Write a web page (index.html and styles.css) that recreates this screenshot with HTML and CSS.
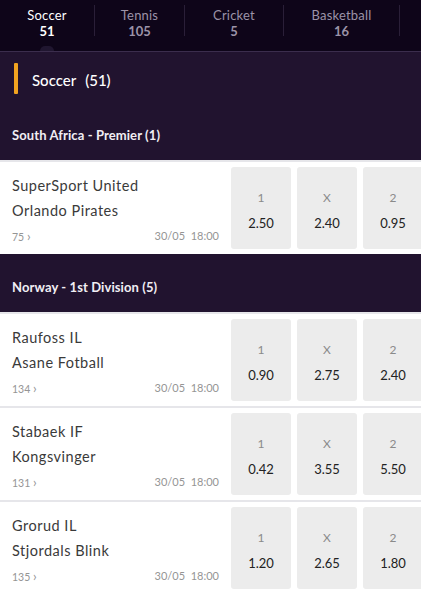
FILE: index.html
```html
<!DOCTYPE html>
<html lang="en">
<head>
<meta charset="utf-8">
<title>Sports</title>
<link rel="stylesheet" href="styles.css">
</head>
<body>
<nav class="tabs">
  <div class="tab tab-active"><span class="tab-name">Soccer</span><span class="tab-count">51</span><span class="tab-marker"></span></div>
  <div class="tab-sep"></div>
  <div class="tab"><span class="tab-name">Tennis</span><span class="tab-count">105</span></div>
  <div class="tab-sep"></div>
  <div class="tab"><span class="tab-name">Cricket</span><span class="tab-count">5</span></div>
  <div class="tab-sep"></div>
  <div class="tab"><span class="tab-name">Basketball</span><span class="tab-count">16</span></div>
  <div class="tab-sep"></div>
</nav>

<section class="sport">
  <div class="sport-title">
    <span class="sport-bar"></span>
    <span class="sport-name">Soccer</span>
    <span class="sport-total">(51)</span>
  </div>

  <div class="league">South Africa - Premier (1)</div>
  <div class="match">
    <div class="teams">
      <div class="team">SuperSport United</div>
      <div class="team">Orlando Pirates</div>
      <div class="meta"><span class="markets">75 <span class="chev">›</span></span><span class="time">30/05&nbsp; 18:00</span></div>
    </div>
    <div class="odd"><span class="odd-label">1</span><span class="odd-value">2.50</span></div>
    <div class="odd"><span class="odd-label">X</span><span class="odd-value">2.40</span></div>
    <div class="odd"><span class="odd-label">2</span><span class="odd-value">0.95</span></div>
  </div>

  <div class="league">Norway - 1st Division (5)</div>
  <div class="match">
    <div class="teams">
      <div class="team">Raufoss IL</div>
      <div class="team">Asane Fotball</div>
      <div class="meta"><span class="markets">134 <span class="chev">›</span></span><span class="time">30/05&nbsp; 18:00</span></div>
    </div>
    <div class="odd"><span class="odd-label">1</span><span class="odd-value">0.90</span></div>
    <div class="odd"><span class="odd-label">X</span><span class="odd-value">2.75</span></div>
    <div class="odd"><span class="odd-label">2</span><span class="odd-value">2.40</span></div>
  </div>
  <div class="match">
    <div class="teams">
      <div class="team">Stabaek IF</div>
      <div class="team">Kongsvinger</div>
      <div class="meta"><span class="markets">131 <span class="chev">›</span></span><span class="time">30/05&nbsp; 18:00</span></div>
    </div>
    <div class="odd"><span class="odd-label">1</span><span class="odd-value">0.42</span></div>
    <div class="odd"><span class="odd-label">X</span><span class="odd-value">3.55</span></div>
    <div class="odd"><span class="odd-label">2</span><span class="odd-value">5.50</span></div>
  </div>
  <div class="match">
    <div class="teams">
      <div class="team">Grorud IL</div>
      <div class="team">Stjordals Blink</div>
      <div class="meta"><span class="markets">135 <span class="chev">›</span></span><span class="time">30/05&nbsp; 18:00</span></div>
    </div>
    <div class="odd"><span class="odd-label">1</span><span class="odd-value">1.20</span></div>
    <div class="odd"><span class="odd-label">X</span><span class="odd-value">2.65</span></div>
    <div class="odd"><span class="odd-label">2</span><span class="odd-value">1.80</span></div>
  </div>
</section>
</body>
</html>
```

FILE: styles.css
```css
* { box-sizing: border-box; }
html, body {
  margin: 0;
  padding: 0;
  background: #21132f;
  font-family: "Lato", "Noto Sans", sans-serif;
  overflow: hidden;
}

.tabs {
  display: flex;
  align-items: flex-start;
  height: 52px;
  background: #0e0519;
  border-bottom: 1px solid #3b2d4d;
}
.tab {
  position: relative;
  display: flex;
  flex-direction: column;
  align-items: center;
  padding: 7px 0 0;
  height: 51px;
  color: #9c93a8;
}
.tab:nth-child(1) { width: 94px; }
.tab:nth-child(3) { width: 89px; }
.tab:nth-child(5) { width: 98px; }
.tab:nth-child(7) { width: 115px; }
.tab-sep {
  width: 1px;
  height: 31px;
  margin-top: 5px;
  background: #2a1f38;
}
.tab-name {
  font-size: 13px;
  line-height: 16px;
  letter-spacing: 0.2px;
}
.tab-count {
  font-size: 13px;
  line-height: 16px;
  font-weight: 700;
}
.tab-active { color: #ffffff; }
.tab-marker {
  position: absolute;
  bottom: 0;
  left: 40px;
  width: 14px;
  height: 5px;
  border-radius: 7px 7px 0 0;
  background: #201630;
}

.sport { background: #21132f; }
.sport-title {
  display: flex;
  align-items: center;
  padding: 11px 0 8px 14px;
  color: #ffffff;
}
.sport-bar {
  width: 4px;
  height: 31px;
  background: #f2a320;
  border-radius: 1px;
}
.sport-name {
  margin-left: 14px;
  font-size: 15px;
  font-weight: 500;
  padding-top: 3px;
}
.sport-total {
  margin-left: 9px;
  font-size: 15px;
  font-weight: 500;
  padding-top: 3px;
}

.league {
  height: 58px;
  padding: 26px 12px 0;
  font-size: 13px;
  line-height: 14px;
  font-weight: 700;
  letter-spacing: 0.1px;
  color: #f1eef4;
}

.match {
  display: grid;
  grid-template-columns: 213px 60px 60px 60px;
  column-gap: 6px;
  width: 423px;
  background: #ffffff;
  border-top: 2px solid #e6e6ea;
  padding: 5px 0 5px 12px;
}
.teams {
  display: flex;
  flex-direction: column;
  padding: 6px 6px 0 0;
  color: #3a3a3a;
}
.team {
  font-size: 14.5px;
  line-height: 25px;
  letter-spacing: 0.5px;
}
.meta {
  display: flex;
  justify-content: space-between;
  margin-top: 6px;
  font-size: 10.5px;
  line-height: 14px;
  color: #959595;
}
.chev { font-size: 13px; }
.time { font-size: 11px; }

.odd {
  display: flex;
  flex-direction: column;
  align-items: center;
  height: 82px;
  padding-top: 23px;
  background: #ececec;
  border-radius: 3px;
}
.odd-label {
  font-size: 12px;
  line-height: 16px;
  color: #8a8a8a;
}
.odd-value {
  margin-top: 9px;
  font-size: 13px;
  line-height: 16px;
  color: #222222;
}
```
